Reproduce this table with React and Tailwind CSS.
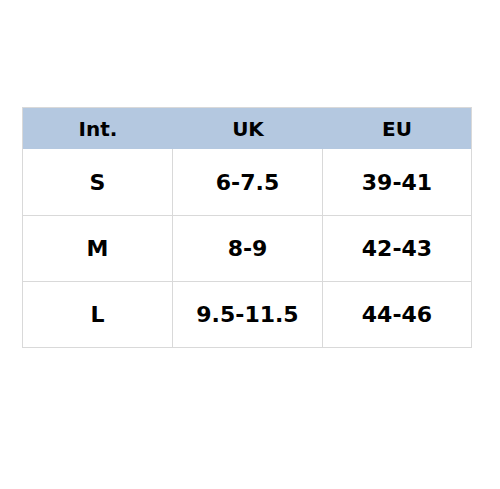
const rows = [
  ['S', '6-7.5', '39-41'],
  ['M', '8-9', '42-43'],
  ['L', '9.5-11.5', '44-46'],
];

const App = () => {
  return (
    <div className="w-[500px] h-[489px] bg-white pt-[107px] pl-[22px]" style={{ fontFamily: '"DejaVu Sans", Verdana, sans-serif' }}>
      <div className="w-[450px] border border-[#d9d9d9]">
        <div className="grid grid-cols-[150px_150px_148px] h-[41px] bg-[#b4c8e0] items-center text-center text-[20px] font-bold text-black">
          <div>Int.</div>
          <div>UK</div>
          <div>EU</div>
        </div>
        {rows.map((row, i) => (
          <div
            key={i}
            className={`grid grid-cols-[150px_150px_148px] h-[66px] text-center text-[22px] font-bold text-black ${i > 0 ? 'border-t border-[#d9d9d9]' : ''}`}
          >
            <div className="flex items-center justify-center border-r border-[#d9d9d9]">{row[0]}</div>
            <div className="flex items-center justify-center border-r border-[#d9d9d9]">{row[1]}</div>
            <div className="flex items-center justify-center">{row[2]}</div>
          </div>
        ))}
      </div>
    </div>
  );
};

export default App;
